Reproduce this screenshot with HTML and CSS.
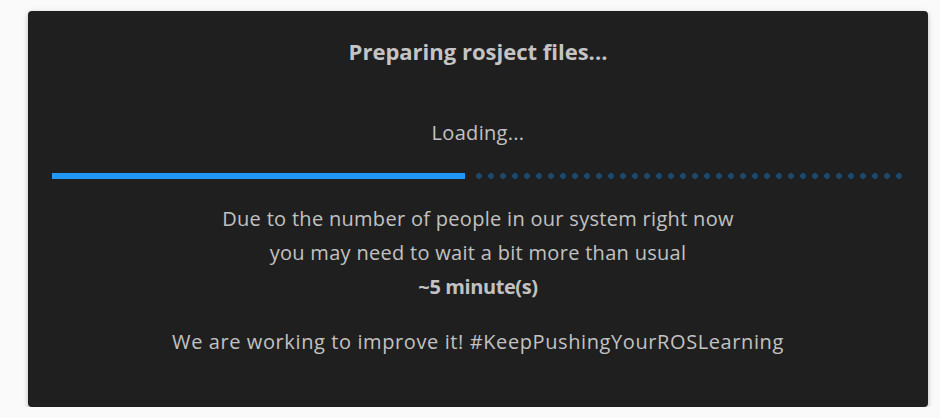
FILE: index.html
```html
<!DOCTYPE html>
<html lang="en">
<head>
<meta charset="utf-8">
<title>Preparing rosject files</title>
<link rel="stylesheet" href="styles.css">
</head>
<body>
<div class="page">
  <div class="card">
    <h2 class="title">Preparing rosject files...</h2>
    <p class="loading">Loading...</p>
    <div class="progress">
      <div class="progress-bar" style="width: 48.5%"></div>
      <div class="progress-buffer"></div>
    </div>
    <div class="message">
      <p>Due to the number of people in our system right now</p>
      <p>you may need to wait a bit more than usual</p>
      <p class="eta">~5 minute(s)</p>
    </div>
    <p class="footer-note">We are working to improve it! #KeepPushingYourROSLearning</p>
  </div>
</div>
</body>
</html>
```
FILE: styles.css
```css
html, body {
  margin: 0;
  padding: 0;
  background: #fafafa;
}
body {
  font-family: "Open Sans", "Noto Sans", sans-serif;
}
.page {
  padding: 11px 12px 0 28px;
}
.card {
  background: #1f1f1f;
  border-radius: 4px;
  box-shadow: 0 2px 4px rgba(0,0,0,0.2), 0 1px 8px rgba(0,0,0,0.08);
  height: 396px;
  box-sizing: border-box;
  padding: 25px 24px 0;
  text-align: center;
  color: #c2c2c2;
  display: flex;
  flex-direction: column;
}
.title {
  margin: 0;
  font-size: 22px;
  line-height: 30px;
  font-weight: 700;
  color: #c4c4c4;
}
.loading {
  margin: 54px 0 0;
  font-size: 20px;
  line-height: 26px;
  letter-spacing: 0.3px;
}
.progress {
  margin-top: 27px;
  display: flex;
  height: 6px;
  align-items: center;
}
.progress-bar {
  height: 6px;
  background: #2196f3;
  flex: none;
}
.progress-buffer {
  flex: 1;
  height: 6px;
  margin-left: 11px;
  background-image: radial-gradient(circle at 3px 3px, #1d4a6c 0, #1d4a6c 2.6px, transparent 3.2px);
  background-size: 12px 6px;
  background-repeat: repeat-x;
}
.message {
  margin-top: 23px;
}
.message p {
  margin: 0;
  font-size: 20px;
  line-height: 34px;
  letter-spacing: 0.3px;
}
.message .eta {
  font-weight: 700;
  letter-spacing: -0.4px;
}
.footer-note {
  margin: 21px 0 0;
  font-size: 20px;
  line-height: 34px;
  letter-spacing: 0.6px;
}
```
